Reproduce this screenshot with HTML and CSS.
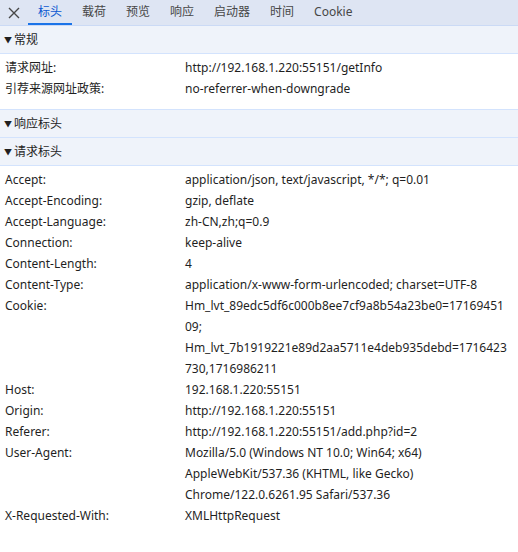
FILE: index.html
```html
<!DOCTYPE html>
<html lang="zh-CN">
<head>
<meta charset="utf-8">
<title>标头</title>
<link rel="stylesheet" href="styles.css">
</head>
<body>
<div class="tabbar">
  <div class="close"><svg width="12" height="12" viewBox="0 0 12 12"><path d="M1 1 L11 11 M11 1 L1 11" stroke="#474747" stroke-width="1.4" fill="none"/></svg></div>
  <div class="tab active">标头</div>
  <div class="tab">载荷</div>
  <div class="tab">预览</div>
  <div class="tab">响应</div>
  <div class="tab">启动器</div>
  <div class="tab">时间</div>
  <div class="tab">Cookie</div>
</div>

<div class="section-head"><span class="tri">▼</span>常规</div>
<div class="rows general">
  <div class="row"><div class="name">请求网址:</div><div class="value">http://192.168.1.220:55151/getInfo</div></div>
  <div class="row"><div class="name">引荐来源网址政策:</div><div class="value">no-referrer-when-downgrade</div></div>
</div>

<div class="section-head"><span class="tri">▼</span>响应标头</div>
<div class="section-head"><span class="tri">▼</span>请求标头</div>
<div class="rows">
  <div class="row"><div class="name">Accept:</div><div class="value">application/json, text/javascript, */*; q=0.01</div></div>
  <div class="row"><div class="name">Accept-Encoding:</div><div class="value">gzip, deflate</div></div>
  <div class="row"><div class="name">Accept-Language:</div><div class="value">zh-CN,zh;q=0.9</div></div>
  <div class="row"><div class="name">Connection:</div><div class="value">keep-alive</div></div>
  <div class="row"><div class="name">Content-Length:</div><div class="value">4</div></div>
  <div class="row"><div class="name">Content-Type:</div><div class="value">application/x-www-form-urlencoded; charset=UTF-8</div></div>
  <div class="row"><div class="name">Cookie:</div><div class="value">Hm_lvt_89edc5df6c000b8ee7cf9a8b54a23be0=17169451<br>09;<br>Hm_lvt_7b1919221e89d2aa5711e4deb935debd=1716423<br>730,1716986211</div></div>
  <div class="row"><div class="name">Host:</div><div class="value">192.168.1.220:55151</div></div>
  <div class="row"><div class="name">Origin:</div><div class="value">http://192.168.1.220:55151</div></div>
  <div class="row"><div class="name">Referer:</div><div class="value">http://192.168.1.220:55151/add.php?id=2</div></div>
  <div class="row"><div class="name">User-Agent:</div><div class="value">Mozilla/5.0 (Windows NT 10.0; Win64; x64)<br>AppleWebKit/537.36 (KHTML, like Gecko)<br>Chrome/122.0.6261.95 Safari/537.36</div></div>
  <div class="row"><div class="name">X-Requested-With:</div><div class="value">XMLHttpRequest</div></div>
</div>
</body>
</html>
```
FILE: styles.css
```css
html, body {
  margin: 0;
  padding: 0;
  background: #ffffff;
}
body {
  font-family: "Noto Sans", "Noto Sans CJK SC", sans-serif;
  font-size: 12px;
  color: #1f1f1f;
}
.tabbar {
  display: flex;
  align-items: stretch;
  height: 25px;
  background: #dee5f3;
  border-bottom: 1px solid #cbdaf5;
}
.close {
  width: 28px;
  display: flex;
  align-items: center;
  justify-content: center;
}
.tab {
  padding: 0 10px;
  line-height: 23px;
  color: #474747;
  border-bottom: 2px solid transparent;
}
.tab.active {
  color: #0b57d0;
  border-bottom-color: #1a73e8;
}
.section-head {
  height: 27px;
  line-height: 27px;
  background: #eff3fa;
  border-bottom: 1px solid #d3e3fd;
  padding-left: 4px;
  color: #1f1f1f;
}
.tri {
  display: inline-block;
  font-size: 8px;
  width: 10px;
  vertical-align: 1px;
}
.rows {
  padding: 3px 0 6px;
}
.rows.general {
  padding: 3px 0 10px;
  border-bottom: 1px solid #d3e3fd;
}
.row {
  display: grid;
  grid-template-columns: 180px 1fr;
  padding-left: 5px;
  line-height: 21px;
}
```
